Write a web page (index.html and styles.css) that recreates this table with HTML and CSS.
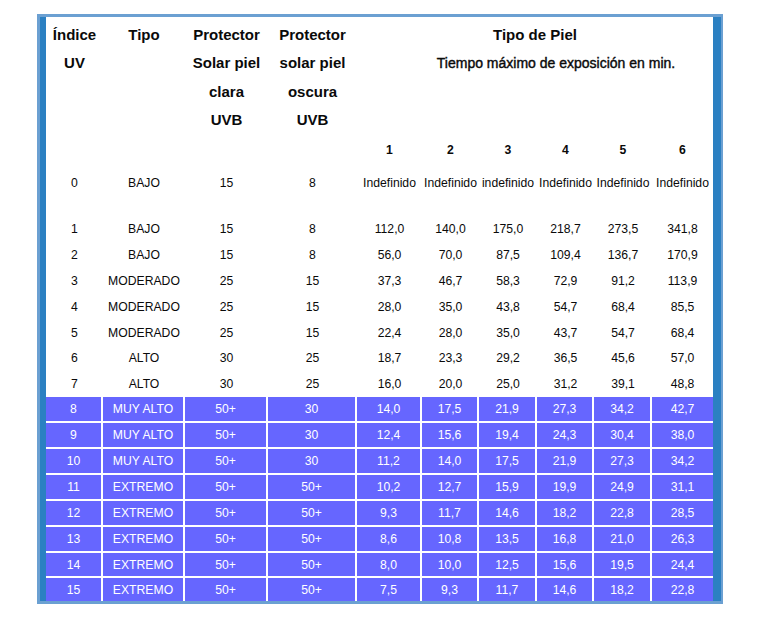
FILE: index.html
```html
<!DOCTYPE html>
<html lang="es">
<head>
<meta charset="utf-8">
<title>Índice UV</title>
<link rel="stylesheet" href="styles.css">
</head>
<body>
<div class="page">
  <div class="frame">
    <div class="panel">
      <table class="uv">
        <colgroup>
          <col style="width:57px"><col style="width:82px"><col style="width:83px"><col style="width:89px">
          <col style="width:65px"><col style="width:57px"><col style="width:58px"><col style="width:57px"><col style="width:58px"><col style="width:61px">
        </colgroup>
        <tr class="head">
          <th rowspan="2">Índice<br>UV</th>
          <th rowspan="2">Tipo</th>
          <th rowspan="2">Protector<br>Solar piel<br>clara<br>UVB</th>
          <th rowspan="2">Protector<br>solar piel<br>oscura<br>UVB</th>
          <th colspan="6">Tipo de Piel<br><span class="tight">Tiempo máximo de exposición en min.</span></th>
        </tr>
        <tr class="nums">
          <th>1</th><th>2</th><th>3</th><th>4</th><th>5</th><th>6</th>
        </tr>
        <tr class="r0">
          <td>0</td><td>BAJO</td><td>15</td><td>8</td>
          <td>Indefinido</td><td>Indefinido</td><td>indefinido</td><td>Indefinido</td><td>Indefinido</td><td>Indefinido</td>
        </tr>
        <tr class="spacer"><td colspan="10"></td></tr>
        <tr class="r"><td>1</td><td>BAJO</td><td>15</td><td>8</td><td>112,0</td><td>140,0</td><td>175,0</td><td>218,7</td><td>273,5</td><td>341,8</td></tr>
        <tr class="r"><td>2</td><td>BAJO</td><td>15</td><td>8</td><td>56,0</td><td>70,0</td><td>87,5</td><td>109,4</td><td>136,7</td><td>170,9</td></tr>
        <tr class="r"><td>3</td><td>MODERADO</td><td>25</td><td>15</td><td>37,3</td><td>46,7</td><td>58,3</td><td>72,9</td><td>91,2</td><td>113,9</td></tr>
        <tr class="r"><td>4</td><td>MODERADO</td><td>25</td><td>15</td><td>28,0</td><td>35,0</td><td>43,8</td><td>54,7</td><td>68,4</td><td>85,5</td></tr>
        <tr class="r"><td>5</td><td>MODERADO</td><td>25</td><td>15</td><td>22,4</td><td>28,0</td><td>35,0</td><td>43,7</td><td>54,7</td><td>68,4</td></tr>
        <tr class="r"><td>6</td><td>ALTO</td><td>30</td><td>25</td><td>18,7</td><td>23,3</td><td>29,2</td><td>36,5</td><td>45,6</td><td>57,0</td></tr>
        <tr class="r"><td>7</td><td>ALTO</td><td>30</td><td>25</td><td>16,0</td><td>20,0</td><td>25,0</td><td>31,2</td><td>39,1</td><td>48,8</td></tr>
        <tr class="r hi"><td>8</td><td>MUY ALTO</td><td>50+</td><td>30</td><td>14,0</td><td>17,5</td><td>21,9</td><td>27,3</td><td>34,2</td><td>42,7</td></tr>
        <tr class="r hi"><td>9</td><td>MUY ALTO</td><td>50+</td><td>30</td><td>12,4</td><td>15,6</td><td>19,4</td><td>24,3</td><td>30,4</td><td>38,0</td></tr>
        <tr class="r hi"><td>10</td><td>MUY ALTO</td><td>50+</td><td>30</td><td>11,2</td><td>14,0</td><td>17,5</td><td>21,9</td><td>27,3</td><td>34,2</td></tr>
        <tr class="r hi"><td>11</td><td>EXTREMO</td><td>50+</td><td>50+</td><td>10,2</td><td>12,7</td><td>15,9</td><td>19,9</td><td>24,9</td><td>31,1</td></tr>
        <tr class="r hi"><td>12</td><td>EXTREMO</td><td>50+</td><td>50+</td><td>9,3</td><td>11,7</td><td>14,6</td><td>18,2</td><td>22,8</td><td>28,5</td></tr>
        <tr class="r hi"><td>13</td><td>EXTREMO</td><td>50+</td><td>50+</td><td>8,6</td><td>10,8</td><td>13,5</td><td>16,8</td><td>21,0</td><td>26,3</td></tr>
        <tr class="r hi"><td>14</td><td>EXTREMO</td><td>50+</td><td>50+</td><td>8,0</td><td>10,0</td><td>12,5</td><td>15,6</td><td>19,5</td><td>24,4</td></tr>
        <tr class="r hi"><td>15</td><td>EXTREMO</td><td>50+</td><td>50+</td><td>7,5</td><td>9,3</td><td>11,7</td><td>14,6</td><td>18,2</td><td>22,8</td></tr>
      </table>
    </div>
  </div>
</div>
</body>
</html>
```

FILE: styles.css
```css
html, body {
  margin: 0;
  padding: 0;
  background: #ffffff;
}

.page {
  padding: 14px 0 0 37px;
  font-family: "Liberation Sans", Arial, sans-serif;
  color: #0a0a0a;
}

.frame {
  width: 686px;
  height: 590px;
  box-sizing: border-box;
  border-style: solid;
  border-color: #6ba0d2;
  border-width: 3px 2px 3px 3px;
  display: flex;
}

.panel {
  flex: 1;
  border-left: 6px solid #2b80c2;
  border-right: 8px solid #2b80c2;
  background: #ffffff;
  overflow: hidden;
}

.uv {
  width: 667px;
  table-layout: fixed;
  border-collapse: separate;
  border-spacing: 0;
  font-size: 12.2px;
}

.uv th,
.uv td {
  padding: 0 1px;
  text-align: center;
  white-space: nowrap;
  overflow: visible;
}

.head {
  height: 120px;
}

.head th {
  vertical-align: top;
  padding-top: 4px;
  font-size: 15px;
  font-weight: bold;
  line-height: 28.4px;
}

.tight {
  display: inline-block;
  margin-left: 42px;
  font-size: 14px;
  font-weight: normal;
  -webkit-text-stroke: 0.4px currentColor;
}

.nums {
  height: 26px;
}

.nums th {
  font-weight: bold;
  font-size: 12.2px;
  vertical-align: middle;
}

.r0 {
  height: 40px;
}

.spacer {
  height: 13px;
}

.r {
  height: 25.9px;
}

.hi td {
  background: #6666ff;
  color: #ffffff;
  border-right: 2px solid #ffffff;
  border-bottom: 2px solid #ffffff;
}

.hi td:last-child {
  border-right: none;
}
```
